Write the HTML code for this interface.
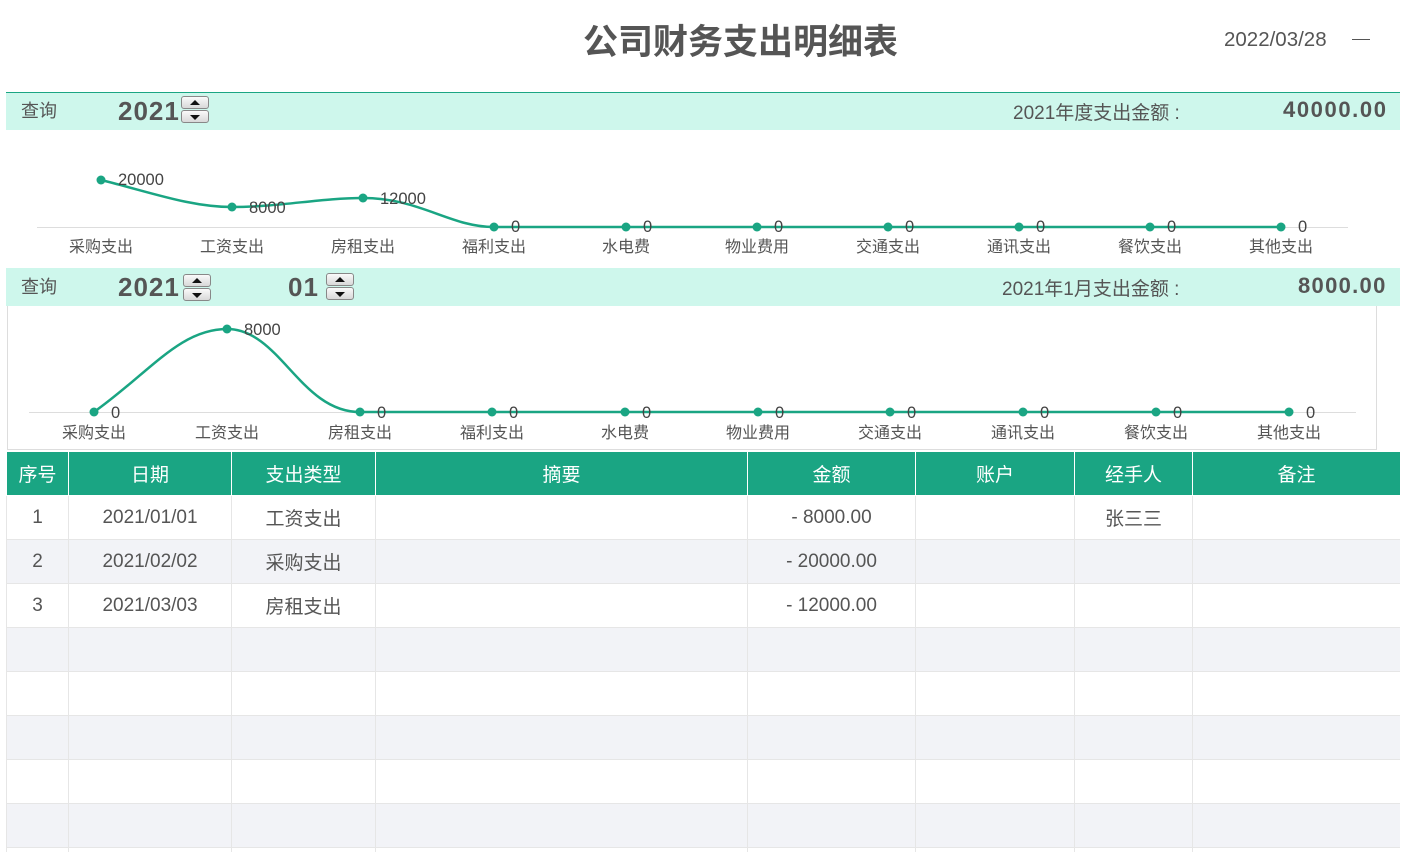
<!DOCTYPE html>
<html><head><meta charset="utf-8"><style>
*{margin:0;padding:0;box-sizing:border-box}
html,body{width:1405px;height:852px;overflow:hidden}
body{background:#fff;position:relative;font-family:"Liberation Sans","Noto Sans CJK SC",sans-serif;color:#555}
.a{position:absolute;white-space:nowrap}
.bar{position:absolute;left:6px;width:1394px;height:38px;background:#cef7ec}
.spin{position:absolute;width:28px;height:27px}
.spin div{height:13px;border:1px solid #888;border-radius:3px;background:linear-gradient(#fafafa,#d8d8d8);margin-bottom:1px;position:relative}
.spin div:after{content:"";position:absolute;left:8px;top:3px;border-left:5px solid transparent;border-right:5px solid transparent}
.spin .u:after{border-bottom:5px solid #111}
.spin .d:after{border-top:5px solid #111;top:4px}
.big{font-weight:bold;font-size:26px;color:#555;letter-spacing:1px}
.wrap{position:absolute;left:6px;top:452px;width:1394px;height:400px;overflow:hidden}
table{border-collapse:collapse;width:1394px;table-layout:fixed}
td,th{height:44px;border:1px solid #e6e6e6;text-align:center;font-size:19px;font-weight:normal;color:#555}
th{background:#1aa583;color:#fff;border:1px solid #fff;border-top:none;height:43px}
tr:nth-child(odd) td{background:#f2f3f7}
.n{padding-top:2px}
</style></head><body>
<div class="a" style="left:583px;top:14px;font-size:35px;font-weight:bold;color:#555">公司财务支出明细表</div>
<div class="a" style="left:1224px;top:28px;font-size:20.5px">2022/03/28</div>
<div class="a" style="left:1352px;top:39px;width:18px;height:1px;background:#555"></div>

<div class="bar" style="top:92px;border-top:1px solid #1aa583"></div>
<div class="a" style="left:21px;top:97px;font-size:18px">查询</div>
<div class="a big" style="left:118px;top:96px">2021</div>
<div class="spin" style="left:181px;top:96px"><div class="u"></div><div class="d"></div></div>
<div class="a" style="left:1013px;top:98px;font-size:19px">2021年度支出金额 :</div>
<div class="a big" style="left:1283px;top:97px;font-size:22px;letter-spacing:1.6px">40000.00</div>

<div class="bar" style="top:268px"></div>
<div class="a" style="left:21px;top:273px;font-size:18px">查询</div>
<div class="a big" style="left:118px;top:272px">2021</div>
<div class="spin" style="left:183px;top:274px"><div class="u"></div><div class="d"></div></div>
<div class="a big" style="left:288px;top:272px">01</div>
<div class="spin" style="left:326px;top:273px"><div class="u"></div><div class="d"></div></div>
<div class="a" style="left:1002px;top:274px;font-size:19px">2021年1月支出金额 :</div>
<div class="a big" style="left:1298px;top:273px;font-size:22px;letter-spacing:1.3px">8000.00</div>
<div class="a" style="left:7px;top:306px;width:1370px;height:144px;border:1px solid #ddd;border-top:none"></div>

<svg class="a" style="left:0;top:0" width="1405" height="452" font-family="Liberation Sans, Noto Sans CJK SC, sans-serif">
<line x1="37" y1="227.5" x2="1348" y2="227.5" stroke="#ddd"/>
<path d="M101 180 C150 192 190 207 232 207 C280 207 320 198 363 198 C420 198 450 227 494 227 L1281 227" fill="none" stroke="#1aa583" stroke-width="2.5"/>
<g fill="#1aa583"><circle cx="101" cy="180" r="4.5"/><circle cx="232" cy="207" r="4.5"/><circle cx="363" cy="198" r="4.5"/><circle cx="494" cy="227" r="4.5"/><circle cx="626" cy="227" r="4.5"/><circle cx="757" cy="227" r="4.5"/><circle cx="888" cy="227" r="4.5"/><circle cx="1019" cy="227" r="4.5"/><circle cx="1150" cy="227" r="4.5"/><circle cx="1281" cy="227" r="4.5"/></g>
<g font-size="16.5" fill="#444"><text x="118" y="185">20000</text><text x="249" y="213">8000</text><text x="380" y="204">12000</text>
<text x="511" y="232">0</text><text x="643" y="232">0</text><text x="774" y="232">0</text><text x="905" y="232">0</text><text x="1036" y="232">0</text><text x="1167" y="232">0</text><text x="1298" y="232">0</text></g>
<g font-size="16" fill="#555" text-anchor="middle"><text x="101" y="252">采购支出</text><text x="232" y="252">工资支出</text><text x="363" y="252">房租支出</text><text x="494" y="252">福利支出</text><text x="626" y="252">水电费</text><text x="757" y="252">物业费用</text><text x="888" y="252">交通支出</text><text x="1019" y="252">通讯支出</text><text x="1150" y="252">餐饮支出</text><text x="1281" y="252">其他支出</text></g>

<line x1="29" y1="412.5" x2="1356" y2="412.5" stroke="#ddd"/>
<path d="M94 412 C150 372 180 329 227 329 C280 329 300 412 360 412 L1289 412" fill="none" stroke="#1aa583" stroke-width="2.5"/>
<g fill="#1aa583"><circle cx="94" cy="412" r="4.5"/><circle cx="227" cy="329" r="4.5"/><circle cx="360" cy="412" r="4.5"/><circle cx="492" cy="412" r="4.5"/><circle cx="625" cy="412" r="4.5"/><circle cx="758" cy="412" r="4.5"/><circle cx="890" cy="412" r="4.5"/><circle cx="1023" cy="412" r="4.5"/><circle cx="1156" cy="412" r="4.5"/><circle cx="1289" cy="412" r="4.5"/></g>
<g font-size="16.5" fill="#444"><text x="111" y="418">0</text><text x="244" y="335">8000</text><text x="377" y="418">0</text><text x="509" y="418">0</text><text x="642" y="418">0</text><text x="775" y="418">0</text><text x="907" y="418">0</text><text x="1040" y="418">0</text><text x="1173" y="418">0</text><text x="1306" y="418">0</text></g>
<g font-size="16" fill="#555" text-anchor="middle"><text x="94" y="438">采购支出</text><text x="227" y="438">工资支出</text><text x="360" y="438">房租支出</text><text x="492" y="438">福利支出</text><text x="625" y="438">水电费</text><text x="758" y="438">物业费用</text><text x="890" y="438">交通支出</text><text x="1023" y="438">通讯支出</text><text x="1156" y="438">餐饮支出</text><text x="1289" y="438">其他支出</text></g>
</svg>

<div class="wrap"><table>
<colgroup><col style="width:62px"><col style="width:163px"><col style="width:144px"><col style="width:372px"><col style="width:168px"><col style="width:159px"><col style="width:118px"><col style="width:208px"></colgroup>
<tr><th>序号</th><th>日期</th><th>支出类型</th><th>摘要</th><th>金额</th><th>账户</th><th>经手人</th><th>备注</th></tr>
<tr><td class="n">1</td><td class="n">2021/01/01</td><td>工资支出</td><td></td><td class="n">- 8000.00</td><td></td><td>张三三</td><td></td></tr>
<tr><td class="n">2</td><td class="n">2021/02/02</td><td>采购支出</td><td></td><td class="n">- 20000.00</td><td></td><td></td><td></td></tr>
<tr><td class="n">3</td><td class="n">2021/03/03</td><td>房租支出</td><td></td><td class="n">- 12000.00</td><td></td><td></td><td></td></tr>
<tr><td></td><td></td><td></td><td></td><td></td><td></td><td></td><td></td></tr>
<tr><td></td><td></td><td></td><td></td><td></td><td></td><td></td><td></td></tr>
<tr><td></td><td></td><td></td><td></td><td></td><td></td><td></td><td></td></tr>
<tr><td></td><td></td><td></td><td></td><td></td><td></td><td></td><td></td></tr>
<tr><td></td><td></td><td></td><td></td><td></td><td></td><td></td><td></td></tr>
<tr><td></td><td></td><td></td><td></td><td></td><td></td><td></td><td></td></tr>
</table></div>
</body></html>
